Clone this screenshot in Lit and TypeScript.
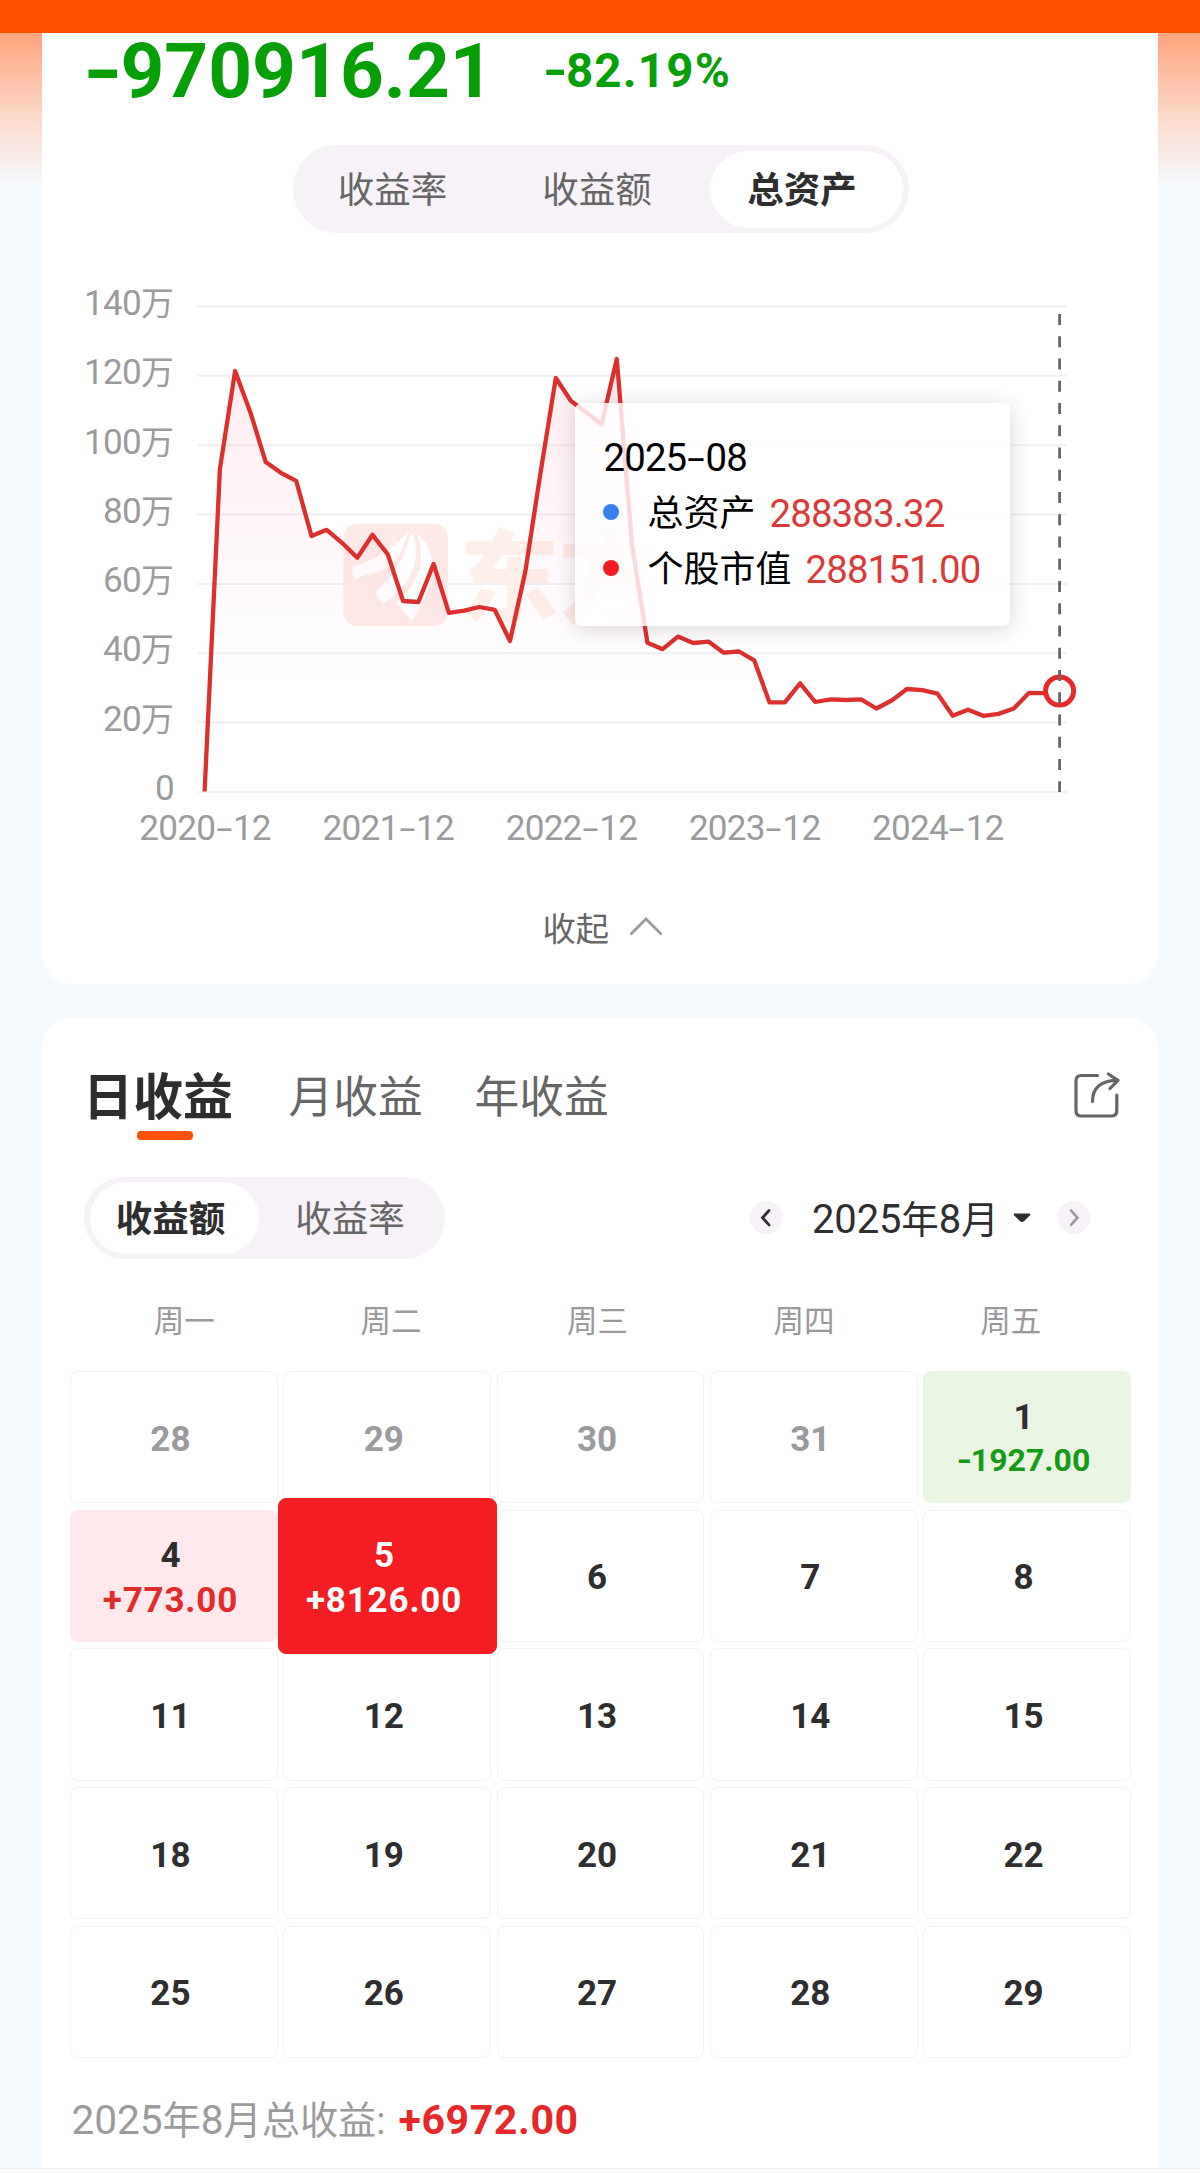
import { LitElement, html, svg, css, nothing } from "lit";
import { customElement, property } from "lit/decorators.js";
import { classMap } from "lit/directives/class-map.js";

/** Wraps digit runs and hyphens so they can be sized apart from the Chinese glyphs. */
const mix = (text: string) =>
  text
    .split(/([0-9.+%]+|-)/)
    .filter(Boolean)
    .map((part) =>
      part === "-"
        ? html`<span class="dash">-</span>`
        : /^[0-9.+%]/.test(part)
          ? html`<span class="num">${part}</span>`
          : part
    );

const textStyles = css`
  .num {
    font-size: 1.065em;
    letter-spacing: -0.022em;
  }
  .dash {
    display: inline-block;
    transform: scaleX(1.75);
    margin: 0 0.13em;
  }
`;

const Y_LABELS = ["140万", "120万", "100万", "80万", "60万", "40万", "20万", "0"];
const X_LABELS = ["2020-12", "2021-12", "2022-12", "2023-12", "2024-12"];

// One height per month, 2020-12 to 2025-08, in plot units.
const LINE = [
  791.5, 469, 371, 412.4, 462, 472.8, 480.8, 536, 529.8, 542.8, 557.8, 534.8, 554.3, 601, 602,
  563.9, 612.9, 610.6, 607, 609.8, 641, 572.3, 472.8, 378, 401, 412.4, 424.2, 359, 545.5, 642.7,
  649.2, 636.6, 643, 641.6, 652.7, 651.5, 660.3, 702.4, 702.4, 683.3, 702, 699.3, 700, 699.3,
  708.5, 700.5, 689, 690.2, 693.6, 715.8, 709.7, 715.8, 713.9, 708.5, 692.8, 693.2, 691,
];
const POINTS = LINE.map((y, i) => `${(204.6 + 15.268 * i).toFixed(1)},${y}`).join(" ");

@customElement("asset-chart")
export class AssetChart extends LitElement {
  static styles = [
    textStyles,
    css`
      :host {
        display: block;
      }
      .chart {
        position: relative;
        display: grid;
        grid-template-columns: 132px 984px;
        height: 528px;
      }
      .y-axis {
        display: flex;
        flex-direction: column;
        justify-content: space-between;
        align-items: flex-end;
        height: 526px;
        padding-top: 3px;
        font-size: 33px;
        line-height: 40px;
        color: #9b9b9d;
      }
      .plot {
        display: block;
        width: 984px;
        height: 520px;
      }
      .mark {
        font-family: "Noto Sans CJK SC", sans-serif;
        font-weight: 900;
        font-size: 100px;
      }
      .x-axis {
        display: grid;
        grid-template-columns: repeat(5, 183.2px);
        margin-left: 71.5px;
        padding-top: 1px;
        height: 37px;
        line-height: 38px;
        font-size: 33px;
        color: #9b9b9d;
        text-align: center;
      }
      .tooltip {
        position: absolute;
        left: 533px;
        top: 123px;
        box-sizing: border-box;
        width: 435px;
        height: 223px;
        padding: 28.5px 0 0 29px;
        border-radius: 7px;
        background: rgba(255, 255, 255, 0.82);
        box-shadow: 0 3px 20px rgba(70, 40, 60, 0.2);
        font-size: 36px;
        line-height: 55.6px;
        color: #000;
        white-space: nowrap;
      }
      .row {
        display: flex;
        align-items: center;
        height: 55.6px;
      }
      .date {
        margin-left: -0.5px;
      }
      .dot {
        width: 16px;
        height: 16px;
        margin: -5px 28.5px 0 -1px;
        border-radius: 50%;
      }
      .blue {
        background: #3880ee;
      }
      .red {
        background: #f01c22;
      }
      .value {
        margin-left: 14px;
        color: #d93b3a;
      }
    `,
  ];

  render() {
    return html`
      <div class="chart">
        <div class="y-axis">${Y_LABELS.map((l) => html`<span>${mix(l)}</span>`)}</div>
        <svg class="plot" viewBox="174 280 984 520">
          <defs>
            <linearGradient id="fade" gradientUnits="userSpaceOnUse" x1="0" y1="358" x2="0" y2="690">
              <stop offset="0" stop-color="#f5283a" stop-opacity="0.085" />
              <stop offset="0.75" stop-color="#f52880" stop-opacity="0.018" />
              <stop offset="1" stop-color="#f52880" stop-opacity="0" />
            </linearGradient>
          </defs>
          ${Y_LABELS.map(
            (_, i) => svg`<path d="M197.5 ${306.4 + i * 69.37}H1067" stroke="#f0eff4" stroke-width="2" />`
          )}
          <rect x="343.5" y="523.5" width="104.5" height="102.5" rx="14" fill="#fdeae8" />
          <path
            d="M353 566C372 563 392 547 409 532C400 552 400 560 383 570C374 575 363 574 355 580C352 574 352 570 353 566Z
               M411 533C406 552 402 562 390 577C384 585 376 591 375 592L383 604C398 595 411 580 415 562C417 550 416 541 411 533Z
               M417 534C429 543 434 558 432 574C429 593 420 607 412 621C406 613 401 609 396 602C411 591 421 574 421 558C421 549 420 541 417 534Z"
            fill="#fff"
          />
          <text class="mark" x="459" y="614" fill="#fdefe9">东方</text>
          <polygon points="${POINTS} 1059.6,792 204.6,792" fill="url(#fade)" />
          <polyline points=${POINTS} fill="none" stroke="#dc302e" stroke-width="4.3" stroke-linejoin="round" />
          <circle cx="1059.6" cy="691" r="14" fill="#fff" stroke="#e62a2a" stroke-width="5" />
          <path d="M1059.6 314V792" stroke="#666" stroke-width="2.8" stroke-dasharray="11.1 11.15" />
        </svg>
        <div class="tooltip">
          <div class="row"><span class="date">${mix("2025-08")}</span></div>
          <div class="row">
            <i class="dot blue"></i><span>总资产</span><span class="value">${mix("288383.32")}</span>
          </div>
          <div class="row">
            <i class="dot red"></i><span>个股市值</span><span class="value">${mix("288151.00")}</span>
          </div>
        </div>
      </div>
      <div class="x-axis">${X_LABELS.map((l) => html`<span>${mix(l)}</span>`)}</div>
    `;
  }
}

interface Day {
  day: number;
  amount?: string;
  state?: "muted" | "loss" | "gain" | "selected";
}

const DAYS: Day[] = [
  { day: 28, state: "muted" },
  { day: 29, state: "muted" },
  { day: 30, state: "muted" },
  { day: 31, state: "muted" },
  { day: 1, amount: "-1927.00", state: "loss" },
  { day: 4, amount: "+773.00", state: "gain" },
  { day: 5, amount: "+8126.00", state: "selected" },
  ...[6, 7, 8, 11, 12, 13, 14, 15, 18, 19, 20, 21, 22, 25, 26, 27, 28, 29].map((day) => ({ day })),
];

@customElement("profit-calendar")
export class ProfitCalendar extends LitElement {
  @property({ attribute: false }) days: Day[] = DAYS;

  static styles = [
    textStyles,
    css`
      :host {
        display: block;
      }
      .week {
        display: grid;
        grid-template-columns: repeat(5, 206.6px);
        margin-left: 39px;
        padding-top: 1px;
        height: 39px;
        line-height: 40px;
        font-size: 30.5px;
        text-align: center;
        color: #99989a;
      }
      .grid {
        display: grid;
        grid-template-columns: repeat(5, 207.5px);
        grid-auto-rows: 132.4px;
        gap: 6.3px 5.8px;
        margin: 29.8px 0 0 28.2px;
      }
      .cell {
        box-sizing: border-box;
        display: flex;
        flex-direction: column;
        align-items: center;
        justify-content: center;
        padding: 4.5px 7px 0 0;
        border: 1.5px solid #f2f2f3;
        border-radius: 8px;
        font-size: 35px;
        line-height: 45.6px;
        font-weight: 700;
        color: #2e2e2f;
        white-space: nowrap;
      }
      .muted {
        color: #9b9b9d;
      }
      .loss {
        background: #eaf6e3;
        border-color: #eaf6e3;
        line-height: 43.7px;
      }
      .gain {
        background: #ffe9ed;
        border-color: #ffe9ed;
      }
      .selected {
        position: relative;
        z-index: 1;
        margin: -11.6px -6px -12px -5.4px;
        background: #f31d22;
        border-color: #f31d22;
        color: #fff;
      }
      .amount .num {
        font-size: 1em;
        letter-spacing: 0.8px;
      }
      .loss .amount {
        color: #149c14;
        font-size: 32px;
      }
      .loss .num {
        letter-spacing: 0;
      }
      .gain .amount {
        color: #e22c2c;
      }
      .amount .dash {
        transform: scaleX(1.25);
        margin: 0 0.02em;
      }
    `,
  ];

  render() {
    return html`
      <div class="week">${["周一", "周二", "周三", "周四", "周五"].map((d) => html`<span>${d}</span>`)}</div>
      <div class="grid">
        ${this.days.map(
          (d) => html`
            <div class=${classMap({ cell: true, [d.state ?? "plain"]: true })}>
              <span>${d.day}</span>
              ${d.amount ? html`<span class="amount">${mix(d.amount)}</span>` : nothing}
            </div>
          `
        )}
      </div>
    `;
  }
}

@customElement("app-root")
export class AppRoot extends LitElement {
  static styles = [
    textStyles,
    css`
      :host {
        display: block;
        height: 2173px;
        overflow: hidden;
        font-family: Roboto, "Noto Sans CJK SC", sans-serif;
        background: linear-gradient(#ffa37c 33px, #fdd5c4 110px, #f5faff 186px);
      }
      .page {
        display: flex;
        flex-direction: column;
        height: 2173px;
      }
      .bar {
        flex: none;
        height: 32.5px;
        background: #ff5000;
      }
      .card {
        flex: none;
        box-sizing: border-box;
        width: 1116px;
        margin-left: 42px;
        background: #fff;
      }
      .assets {
        height: 951.8px;
        border-radius: 0 0 30px 30px;
      }
      .daily {
        height: 1149.7px;
        margin-top: 34px;
        border-radius: 30px 30px 0 0;
      }
      .bottom {
        flex: none;
        box-sizing: border-box;
        height: 5px;
        border-top: 1px solid #eeeff0;
        background: #fafafa;
      }
      .summary {
        display: flex;
        align-items: center;
        box-sizing: border-box;
        height: 75px;
        padding: 2px 0 0 46px;
        gap: 52px;
        font-weight: 700;
        color: #06a006;
        white-space: nowrap;
      }
      .summary .num {
        font-size: 1em;
        letter-spacing: 0;
      }
      .summary .dash {
        transform: scaleX(1.35);
        margin: 0 0.03em 0 0;
      }
      .total {
        font-size: 76.5px;
      }
      .rate {
        font-size: 47.5px;
      }
      .summary .rate .num {
        letter-spacing: 1.2px;
      }
      .segment {
        display: flex;
        box-sizing: border-box;
        background: #f6f2f7;
        font-size: 36.5px;
        color: #666;
        text-align: center;
        white-space: nowrap;
      }
      .segment > * {
        flex: none;
        box-sizing: border-box;
      }
      .segment b {
        background: #fff;
        color: #2e2e2f;
      }
      .kinds {
        width: 616px;
        height: 88.6px;
        margin: 37.2px 0 46.7px 251px;
        padding: 6px 0;
        border-radius: 45px;
        line-height: 80px;
      }
      .kinds span:first-child {
        width: 199px;
      }
      .kinds span {
        width: 210px;
      }
      .kinds b {
        width: 193px;
        height: 77px;
        margin-left: 8px;
        padding-right: 9px;
        border-radius: 39px;
      }
      .collapse {
        display: flex;
        align-items: center;
        height: 40px;
        margin: 61px 0 0 500.5px;
        font-size: 33.3px;
        color: #666;
        gap: 19.5px;
      }
      .tabs {
        display: flex;
        align-items: center;
        height: 113px;
        padding: 37px 37.5px 0 41px;
        box-sizing: border-box;
        color: #666;
        font-size: 44.7px;
        white-space: nowrap;
      }
      .tab {
        margin-left: 52px;
      }
      .tab.active {
        margin: 0;
        font-size: 50px;
        font-weight: 700;
        color: #2e2e2f;
      }
      .tab.active + .tab {
        margin-left: 55.5px;
      }
      .share {
        margin: 16px 0 0 auto;
        align-self: flex-start;
      }
      .underline {
        width: 56px;
        height: 8.6px;
        margin-left: 95px;
        border-radius: 4px;
        background: #fb5208;
      }
      .controls {
        display: flex;
        align-items: center;
        height: 82.5px;
        margin: 36.8px 0 42px 42px;
      }
      .modes {
        flex: none;
        width: 361px;
        height: 82.5px;
        padding: 5.5px 6px;
        border-radius: 42px;
        line-height: 76px;
      }
      .modes b {
        width: 169px;
        height: 72px;
        padding-right: 8px;
        border-radius: 36px;
      }
      .modes span {
        width: 182px;
      }
      .step {
        flex: none;
        width: 33px;
        height: 33px;
      }
      .prev {
        margin-left: 305px;
      }
      .month {
        width: 184px;
        margin: -2px 16.5px 0 29px;
        font-size: 37.5px;
        color: #2e2e2f;
        white-space: nowrap;
      }
      .month .num {
        letter-spacing: -0.1px;
      }
      .next {
        margin-left: 26px;
      }
      .footer {
        display: flex;
        align-items: center;
        height: 60px;
        margin: 29.5px 0 0 29.5px;
        font-size: 38.2px;
        color: #9b9b9d;
        white-space: nowrap;
      }
      .footer .num {
        letter-spacing: -0.1px;
      }
      .sum {
        margin: 5px 0 0 13px;
        font-weight: 700;
        font-size: 38.5px;
        color: #e62828;
      }
      .footer .sum .num {
        letter-spacing: 0.6px;
      }
    `,
  ];

  render() {
    return html`
      <div class="page">
        <div class="bar"></div>
        <section class="card assets">
          <div class="summary">
            <span class="total">${mix("-970916.21")}</span>
            <span class="rate">${mix("-82.19%")}</span>
          </div>
          <div class="segment kinds"><span>收益率</span><span>收益额</span><b>总资产</b></div>
          <asset-chart></asset-chart>
          <div class="collapse">
            <span>收起</span>
            <svg width="34" height="22" viewBox="0 0 34 22" fill="none" stroke="#999" stroke-width="2.8">
              <path d="M1.5 18.5L17 3L32.5 18.5" />
            </svg>
          </div>
        </section>
        <section class="card daily">
          <div class="tabs">
            <span class="tab active">日收益</span>
            <span class="tab">月收益</span>
            <span class="tab">年收益</span>
            <svg class="share" width="48" height="48" viewBox="0 0 48 48" fill="none" stroke="#666" stroke-width="3.2" stroke-linecap="round" stroke-linejoin="round">
              <path d="M24.5 4.5H8.5Q3 4.5 3 10V39.5Q3 45 8.5 45H38.3Q43.8 45 43.8 39.5V24" />
              <path d="M19.5 30.5C19.5 17 28 9.3 44.8 9.3M35.3 3L45 9.3L37 17.5" />
            </svg>
          </div>
          <div class="underline"></div>
          <div class="controls">
            <div class="segment modes"><b>收益额</b><span>收益率</span></div>
            <svg class="step prev" viewBox="0 0 33 33" fill="none">
              <circle cx="16.5" cy="16.5" r="16.5" fill="#f6f2f7" />
              <path d="M19 9.5L12.5 16.7L19 23.9" stroke="#2e2e2f" stroke-width="2.8" stroke-linecap="round" />
            </svg>
            <span class="month">${mix("2025年8月")}</span>
            <svg width="18" height="10" viewBox="0 0 18 10">
              <path d="M1.5 0.5H16.5Q18 0.8 17 2.2L11 8.2Q9 9.8 7 8.2L1 2.2Q0 0.8 1.5 0.5Z" fill="#2e2e2f" />
            </svg>
            <svg class="step next" viewBox="0 0 33 33" fill="none">
              <circle cx="16.5" cy="16.5" r="16.5" fill="#f6f2f7" />
              <path d="M14 9.5L20.5 16.7L14 23.9" stroke="#999" stroke-width="2.6" stroke-linecap="round" />
            </svg>
          </div>
          <profit-calendar></profit-calendar>
          <div class="footer">
            <span>${mix("2025年8月总收益:")}</span>
            <span class="sum">${mix("+6972.00")}</span>
          </div>
        </section>
        <div class="bottom"></div>
      </div>
    `;
  }
}
